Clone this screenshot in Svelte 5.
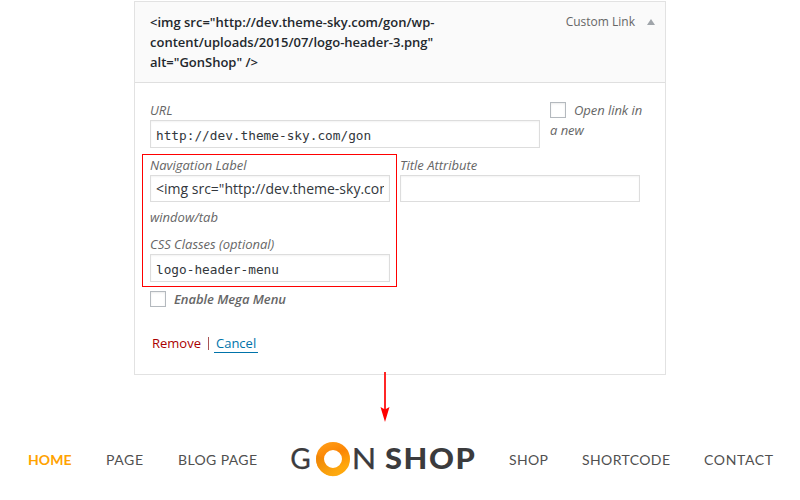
<script>
  const left = [
    { name: 'HOME', width: 43.5 },
    { name: 'PAGE', width: 37 },
    { name: 'BLOG PAGE', width: 79 },
  ];
  const right = [
    { name: 'SHOP', width: 39 },
    { name: 'SHORTCODE', width: 88 },
    { name: 'CONTACT', width: 69 },
  ];
</script>

{#snippet link(item, active)}
  <svg class="link" class:active width={item.width} height="40">
    <text x="0" y="25" textLength={item.width} lengthAdjust="spacing">{item.name}</text>
  </svg>
{/snippet}

<div class="page">
  <section class="item">
    <header>
      <strong>&lt;img src="http://dev.theme-sky.com/gon/wp-<br />content/uploads/2015/07/logo-header-3.png"<br />alt="GonShop" /&gt;</strong>
      <span class="type">Custom Link</span>
      <svg class="caret" width="8" height="6" viewBox="0 0 8 6"><path d="M4 0L8 6H0Z" fill="#a0a5aa" /></svg>
    </header>
    <div class="body">
      <div class="row url">
        <div class="field wide">
          <span class="label">URL</span>
          <div class="input mono">http://dev.theme-sky.com/gon</div>
        </div>
        <div class="open"><i class="check"></i>Open link in<br />a new</div>
      </div>
      <div class="row names">
        <div class="field">
          <span class="label">Navigation Label</span>
          <div class="input"><span class="clip">&lt;img src="http://dev.theme-sky.com</span></div>
        </div>
        <div class="field">
          <span class="label">Title Attribute</span>
          <div class="input"></div>
        </div>
      </div>
      <div class="label tab">window/tab</div>
      <div class="field css">
        <span class="label">CSS Classes (optional)</span>
        <div class="input mono">logo-header-menu</div>
      </div>
      <div class="mega"><i class="check"></i><b>Enable Mega Menu</b></div>
      <div class="actions"><span class="remove">Remove</span><span class="bar"></span><span class="cancel">Cancel</span></div>
    </div>
    <div class="highlight"></div>
    <svg class="arrow" width="10" height="50" viewBox="0 0 10 50">
      <path d="M5 0V40" stroke="#f00" stroke-width="1.7" />
      <path d="M5 50L.5 35L5 37.5L9.5 35Z" fill="#f00" />
    </svg>
  </section>

  <nav>
    <div class="links start">
      {#each left as item, i}{@render link(item, i === 0)}{/each}
    </div>
    <svg class="logo" width="190" height="40" viewBox="0 0 190 40">
      <defs>
        <linearGradient id="ring" x1="0" y1="0" x2="0.4" y2="1">
          <stop offset="0" stop-color="#ff9a14" />
          <stop offset=".45" stop-color="#fb8505" />
          <stop offset="1" stop-color="#ffa80c" />
        </linearGradient>
        <linearGradient id="shade" x1="0" y1="0" x2="1" y2="1">
          <stop offset="0" stop-color="#e98205" />
          <stop offset="1" stop-color="#ffae12" />
        </linearGradient>
      </defs>
      <g fill="#3b3b3d" stroke="#3b3b3d" stroke-width=".25" font-family="Lato, sans-serif" font-size="28.5">
        <text x="0.3" y="29" textLength="20.5" lengthAdjust="spacingAndGlyphs">G</text>
        <text x="61.8" y="29" textLength="24.5" lengthAdjust="spacingAndGlyphs">N</text>
        <text class="bold" x="95" y="29" textLength="91.5" lengthAdjust="spacingAndGlyphs">SHOP</text>
      </g>
      <circle cx="43" cy="19" r="13" fill="none" stroke="url(#ring)" stroke-width="8" />
      <path d="M27 14A17 17 0 0 0 49 35L49 26A9 9 0 0 1 34 18Q30 18 27 14Z" fill="url(#shade)" opacity=".75" />
    </svg>
    <div class="links end">
      {#each right as item}{@render link(item, false)}{/each}
    </div>
  </nav>
</div>

<style>
  :global(body) { background: #fff; }
  .page { width: 800px; height: 500px; overflow: hidden; padding-top: 1px; box-sizing: border-box; font: 13px/20px "Open Sans", sans-serif; color: #666; }
  .page * { box-sizing: border-box; }
  .item { position: relative; width: 532px; height: 374px; margin-left: 134px; border: 1px solid #e2e2e2; }
  header { height: 81px; padding: 10px 10px 0 15px; display: flex; align-items: flex-start; background: #fafafa; border-bottom: 1px solid #dfdfdf; }
  strong { flex: 1; font-weight: 600; color: #23282d; white-space: nowrap; }
  .type { font-size: 12px; line-height: 19px; }
  .caret { margin: 7px 0 0 12px; }
  .body { padding: 17px 15px 0; }
  .row { display: flex; gap: 10px; }
  .field { width: 240px; }
  .wide { width: 390px; }
  .label, .open, .mega { font-style: italic; }
  .label { display: block; height: 20px; white-space: nowrap; }
  .input { height: 27px; border: 1px solid #ddd; padding: 0 5px; font-size: 14px; line-height: 26px; color: #32373c; background: #fff; box-shadow: inset 0 1px 2px rgba(0, 0, 0, .05); white-space: nowrap; }
  .url .input, .css .input { height: 28px; }
  .clip { display: block; overflow: hidden; }
  .mono { font-family: "DejaVu Sans Mono", monospace; font-size: 12.77px; line-height: 29px; }
  .check { display: inline-block; width: 16px; height: 16px; border: 1px solid #b4b9be; background: #fff; vertical-align: -3px; margin-right: 8px; box-shadow: inset 0 1px 2px rgba(0, 0, 0, .08); }
  .open { white-space: nowrap; letter-spacing: -.05px; }
  .names { margin-top: 7px; }
  .tab { margin-top: 5px; }
  .css { margin-top: 7px; }
  .mega { margin-top: 7px; height: 20px; letter-spacing: -.05px; }
  .mega b { font-weight: 600; }
  .actions { display: flex; margin: 24px 0 0 2px; }
  .remove { color: #a00; }
  .bar { width: 1px; height: 13px; margin: 4px 5px 0 7px; background: #a55; }
  .cancel { height: 20px; padding: 0 2px; color: #0073aa; border-bottom: 1px solid #0073aa; }
  .highlight { position: absolute; left: 7px; top: 152px; width: 255px; height: 133px; border: 1px solid #f00; }
  .arrow { position: absolute; left: 245px; top: 370px; }
  nav { display: flex; height: 40px; margin-top: 65px; font: 14px/40px Lato, sans-serif; white-space: nowrap; }
  .links { display: flex; justify-content: space-between; }
  .link { overflow: visible; fill: #505050; }
  .active { fill: #ffa200; font-weight: 700; }
  .start { width: 229px; margin-left: 28px; }
  .logo { margin: 0 0 0 33px; flex: none; }
  .bold { font-weight: 900; letter-spacing: 1.5px; stroke: none; }
  .end { width: 264px; margin-left: 29px; }
</style>
